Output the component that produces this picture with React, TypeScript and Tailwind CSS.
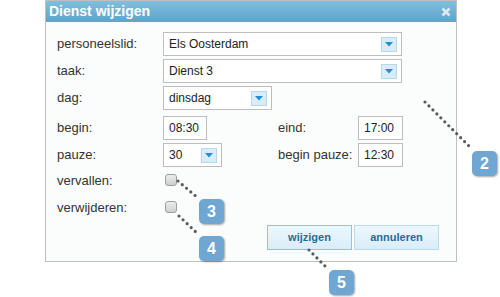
import React from 'react';

const font = { fontFamily: '"Liberation Sans", Arial, sans-serif' };

const Arrow = () => (
  <span className="flex h-[15px] w-[16px] items-center justify-center border border-[#b6d8ee] bg-[#d9ecf9]">
    <svg width="8" height="5" viewBox="0 0 8 5">
      <path d="M0 0h8L4 4.5z" fill="#1d8fd2" />
    </svg>
  </span>
);

const Select = ({ value, width }: { value: string; width: string }) => (
  <div className={`flex h-6 ${width} items-center justify-between border border-[#bdbdbd] bg-white pl-[5px] pr-[4px] text-[12px] text-[#222]`}>
    <span>{value}</span>
    <Arrow />
  </div>
);

const Input = ({ value, width }: { value: string; width: string }) => (
  <div className={`flex h-6 ${width} items-center border border-[#bdbdbd] bg-white pl-[5px] text-[12px] text-[#222]`}>
    {value}
  </div>
);

const Checkbox = () => (
  <span className="block h-[12px] w-[12px] rounded-[3px] border border-[#9e9e9e] bg-gradient-to-b from-[#ececec] to-[#cfcfcf]" />
);

const Label = ({ children }: { children: React.ReactNode }) => (
  <span className="w-[106px] shrink-0 text-[13px] text-[#333]">{children}</span>
);

const Badge = ({ n, x, y }: { n: number; x: number; y: number }) => (
  <div
    className="absolute flex h-[25px] w-[25px] items-center justify-center rounded-[5px] bg-[#6fa7d2] text-[16px] font-bold text-white shadow-[1px_1px_2px_rgba(0,0,0,0.35)]"
    style={{ left: x, top: y }}
  >
    {n}
  </div>
);

export default function App() {
  return (
    <div className="relative h-[297px] w-[500px] overflow-hidden bg-white" style={font}>
      <div className="ml-[45px] w-[412px] border border-[#bfbfbf] bg-[#fbfdfd]">
        <div className="flex h-[21px] items-center justify-between bg-gradient-to-b from-[#80bfdc] to-[#5ea3cc] pl-[3px] pr-[5px]">
          <span className="text-[14px] font-bold text-white">Dienst wijzigen</span>
          <svg width="10" height="10" viewBox="0 0 10 10">
            <path d="M1.5 1.5l7 7M8.5 1.5l-7 7" stroke="#dfeaf1" strokeWidth="2.6" />
          </svg>
        </div>

        <div className="flex flex-col px-[11px] pt-[10px] pb-[11px]">
          <div className="flex items-center">
            <Label>personeelslid:</Label>
            <Select value="Els Oosterdam" width="w-[239px]" />
          </div>
          <div className="mt-[3px] flex items-center">
            <Label>taak:</Label>
            <Select value="Dienst 3" width="w-[239px]" />
          </div>
          <div className="mt-[3px] flex items-center">
            <Label>dag:</Label>
            <Select value="dinsdag" width="w-[109px]" />
          </div>
          <div className="mt-[6px] flex items-center">
            <Label>begin:</Label>
            <Input value="08:30" width="w-[44px]" />
            <span className="ml-[71px] w-[80px] text-[13px] text-[#333]">eind:</span>
            <Input value="17:00" width="w-[45px]" />
          </div>
          <div className="mt-[3px] flex items-center">
            <Label>pauze:</Label>
            <Select value="30" width="w-[59px]" />
            <span className="ml-[56px] w-[80px] text-[13px] text-[#333]">begin pauze:</span>
            <Input value="12:30" width="w-[45px]" />
          </div>
          <div className="mt-[2px] flex h-6 items-center">
            <Label>vervallen:</Label>
            <span className="ml-[2px] -mt-[2px]">
              <Checkbox />
            </span>
          </div>
          <div className="mt-[3px] flex h-6 items-center">
            <Label>verwijderen:</Label>
            <span className="ml-[2px] -mt-[2px]">
              <Checkbox />
            </span>
          </div>
          <div className="mt-[5px] flex justify-end gap-[2px] pr-[6px]">
            <button className="h-[25px] w-[85px] border border-[#8cc6e7] bg-gradient-to-b from-[#eef7fd] to-[#d9edf9] text-[11px] font-bold text-[#1f6e9c]">
              wijzigen
            </button>
            <button className="h-[25px] w-[85px] border border-[#b7dbef] bg-gradient-to-b from-[#eef7fd] to-[#d9edf9] text-[11px] font-bold text-[#1f6e9c]">
              annuleren
            </button>
          </div>
        </div>
      </div>

      <svg className="absolute left-0 top-0" width="500" height="297">
        <g stroke="#5a5a5a" strokeWidth="3.2" strokeLinecap="round" strokeDasharray="0 5.6" fill="none">
          <line x1="425" y1="102" x2="472" y2="149" />
          <line x1="178" y1="181" x2="198" y2="198" />
          <line x1="179" y1="216" x2="198" y2="234" />
          <line x1="309" y1="250" x2="328" y2="269" />
        </g>
      </svg>

      <Badge n={2} x={472} y={151} />
      <Badge n={3} x={199} y={199} />
      <Badge n={4} x={199} y={236} />
      <Badge n={5} x={329} y={270} />
    </div>
  );
}
